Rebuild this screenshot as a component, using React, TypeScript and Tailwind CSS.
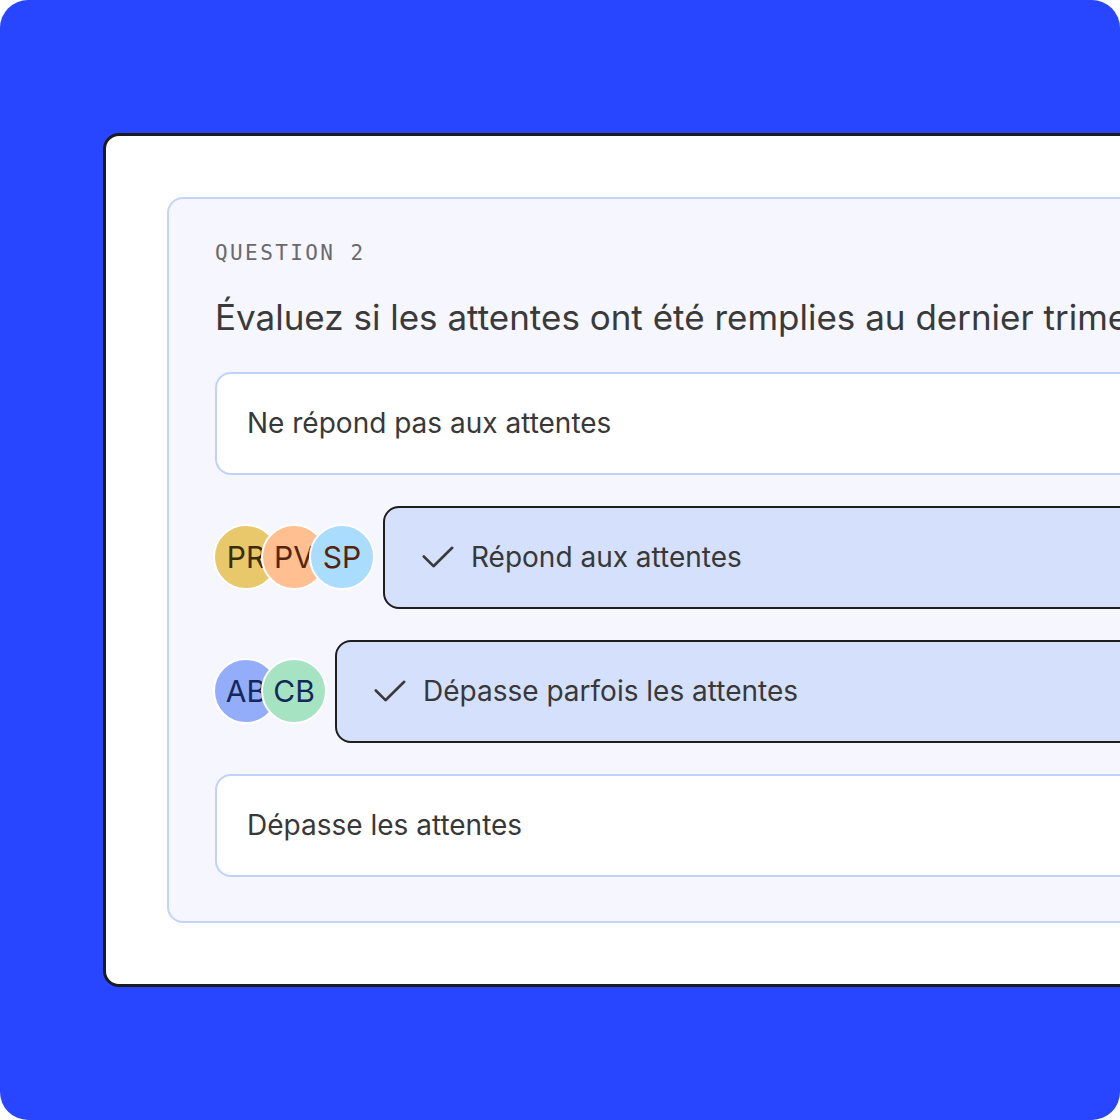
import React from "react";

const Check = () => (
  <svg width="32" height="23" viewBox="0 0 32 23" fill="none" className="shrink-0">
    <path d="M1.8 10.5 L11.5 20.2 L30.2 1.8" stroke="#3a3a3a" strokeWidth="2.6" strokeLinecap="round" strokeLinejoin="round" />
  </svg>
);

type Av = { t: string; bg: string; fg: string };

const Avatars = ({ list }: { list: Av[] }) => (
  <div className="flex items-center -ml-[2px] shrink-0">
    {list.map((a, i) => (
      <div
        key={a.t}
        className={`relative w-[66px] h-[66px] rounded-full border-2 border-white flex items-center justify-center overflow-hidden text-[30px] leading-none ${i > 0 ? "-ml-[18px]" : ""}`}
        style={{ backgroundColor: a.bg, color: a.fg }}
      >
        <span className="whitespace-nowrap">{a.t}</span>
      </div>
    ))}
  </div>
);

const Plain = ({ label }: { label: string }) => (
  <div className="h-[103px] rounded-[16px] border-2 border-[#bfd1ff] bg-white flex items-center pl-[30px] text-[28px] leading-[34px] text-[#383838] whitespace-nowrap">
    {label}
  </div>
);

const Selected = ({ label, avatars }: { label: string; avatars: Av[] }) => (
  <div className="flex items-center gap-2">
    <Avatars list={avatars} />
    <div className="flex-1 h-[103px] rounded-[16px] border-2 border-[#1e1e1e] bg-[#d5e0fd] flex items-center gap-[17px] pl-[37px] text-[28px] leading-[34px] text-[#383838]">
      <Check />
      <span className="whitespace-nowrap">{label}</span>
    </div>
  </div>
);

export default function App() {
  return (
    <div className="w-[1120px] h-[1120px] bg-white" style={{ fontFamily: "Inter, 'Noto Sans', sans-serif" }}>
      <div className="w-full h-full rounded-[28px] bg-[#2845ff] overflow-hidden pt-[133px] pl-[103px]">
        <div className="w-[1300px] rounded-[16px] border-[3px] border-[#1c1c1c] bg-white p-[61px]">
          <div className="rounded-[16px] border-2 border-[#c2d3ff] bg-[#f5f6fe] pt-[39.5px] pl-[46px] pb-[44.5px]">
            <div
              className="text-[21px] leading-[28px] tracking-[2.4px] text-[#6a6a6a]"
              style={{ fontFamily: "'DejaVu Sans Mono', 'Liberation Mono', monospace" }}
            >
              QUESTION 2
            </div>
            <div className="mt-[28px] text-[35px] leading-[44px] text-[#3a3a3a] whitespace-nowrap">
              Évaluez si les attentes ont été remplies au dernier trimestre
            </div>
            <div className="mt-[33px] flex flex-col gap-[31px]">
              <Plain label="Ne répond pas aux attentes" />
              <Selected
                label="Répond aux attentes"
                avatars={[
                  { t: "PR", bg: "#e8c86a", fg: "#3b2c08" },
                  { t: "PV", bg: "#ffbf91", fg: "#55260a" },
                  { t: "SP", bg: "#aadcfd", fg: "#55230a" },
                ]}
              />
              <Selected
                label="Dépasse parfois les attentes"
                avatars={[
                  { t: "AB", bg: "#93adfb", fg: "#15285a" },
                  { t: "CB", bg: "#a6e3c3", fg: "#15285a" },
                ]}
              />
              <Plain label="Dépasse les attentes" />
            </div>
          </div>
        </div>
      </div>
    </div>
  );
}
